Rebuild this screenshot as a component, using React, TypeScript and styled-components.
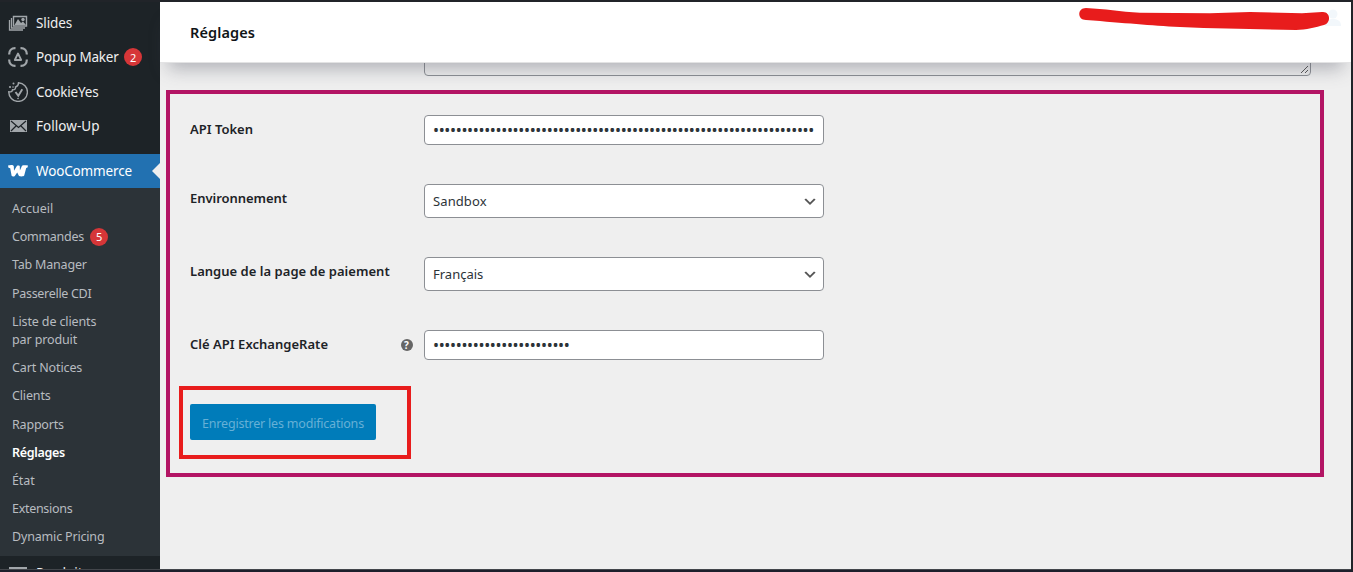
import React from "react";
import styled, { createGlobalStyle } from "styled-components";

const Global = createGlobalStyle`
  *, *::before, *::after { box-sizing: border-box; }
  body { margin: 0; background: #efefef; overflow: hidden; }
`;

const Frame = styled.div`
  display: flex;
  width: 1353px;
  height: 572px;
  border: solid #212429;
  border-width: 2px 2px 2px 0;
  border-bottom-color: #1c1f2b;
  background: #efefef;
  overflow: hidden;
  font-family: "Noto Sans", "Open Sans", sans-serif;
  font-size: 13px;
  color: #1d2327;
`;

const Sidebar = styled.nav`
  width: 160px;
  flex: none;
  height: 568px;
  overflow: hidden;
  background: #1d2327;
  border-bottom: 1px solid #43464b;
  padding-top: 4px;
`;

const MenuItem = styled.a<{ $active?: boolean }>`
  position: relative;
  display: flex;
  align-items: center;
  height: ${(p) => (p.$active ? "34px" : "34.25px")};
  margin-top: ${(p) => (p.$active ? "11px" : "0")};
  color: ${(p) => (p.$active ? "#fff" : "#f0f0f1")};
  background: ${(p) => (p.$active ? "#2271b1" : "transparent")};
  font-size: 13.5px;
  white-space: nowrap;
`;

const Arrow = styled.span`
  position: absolute;
  right: 0;
  top: 9px;
  border: 8px solid transparent;
  border-right-color: #efefef;
  border-left-width: 0;
`;

const IconCell = styled.span`
  display: flex;
  justify-content: center;
  width: 36px;
  color: #a1a6aa;
  svg { display: block; }
`;

const Text = styled.span<{ $ls?: number }>`
  letter-spacing: ${(p) => p.$ls ?? 0}px;
`;

const Badge = styled.span`
  display: inline-flex;
  align-items: center;
  justify-content: center;
  width: 18px;
  height: 18px;
  margin-left: 5.5px;
  border-radius: 9px;
  background: #d63638;
  color: #fff;
  font-size: 11px;
`;

const Submenu = styled.div`
  display: flex;
  flex-direction: column;
  height: 368px;
  padding-top: 6.9px;
  background: #2c3338;
`;

const SubItem = styled.a<{ $current?: boolean }>`
  display: flex;
  flex: none;
  align-items: center;
  padding: 5px 12px;
  min-height: 28.2px;
  font-size: 12.5px;
  line-height: 18.2px;
  white-space: pre;
  font-weight: ${(p) => (p.$current ? 600 : 400)};
  color: ${(p) => (p.$current ? "#fff" : "#b8bcc0")};
  ${Badge} { margin: -5px 0 -5px 6px; }
`;

const Main = styled.main`
  flex: 1;
  display: flex;
  flex-direction: column;
  min-width: 0;
  border-bottom: 1px solid #43464b;
`;

const Header = styled.header`
  position: relative;
  z-index: 1;
  flex: none;
  display: flex;
  align-items: center;
  justify-content: space-between;
  height: 61px;
  padding-left: 30px;
  background: #fff;
  border-bottom: 1px solid #e3e3e4;
  box-shadow: 0 14px 18px -8px rgba(75, 80, 95, 0.38);
`;

const Title = styled.h1`
  margin: 0;
  font-size: 14.5px;
  font-weight: 600;
  color: #101517;
`;

const HeaderMark = styled.svg`
  display: block;
  align-self: flex-start;
`;

const Textarea = styled.div`
  display: flex;
  justify-content: flex-end;
  align-items: flex-end;
  flex: none;
  width: 887px;
  height: 19px;
  margin: -6px 0 0 264px;
  border: 1px solid #8c8f94;
  border-radius: 4px;
`;

const Outline = styled.section`
  width: 1158px;
  height: 387px;
  margin: 14px 0 0 6px;
  border: 4px solid #b31564;
  padding: 21px 0 0 20px;
`;

const Row = styled.div<{ $h: number }>`
  display: flex;
  align-items: flex-start;
  height: ${(p) => p.$h}px;
`;

const Label = styled.label`
  display: flex;
  justify-content: space-between;
  width: 234px;
  padding: 5px 11px 0 0;
  line-height: 18px;
  font-size: 13px;
  font-weight: 600;
  white-space: nowrap;
`;

const Field = styled.div<{ $select?: boolean }>`
  display: flex;
  align-items: center;
  justify-content: space-between;
  width: 400px;
  height: ${(p) => (p.$select ? 34 : 30)}px;
  padding: 0 5px 0 8px;
  background: #fff;
  border: 1px solid #8c8f94;
  border-radius: 4px;
  color: #2c3338;
  white-space: nowrap;
`;

const Dots = styled.span`
  font-family: "Noto Sans", sans-serif;
  font-size: 16px;
  line-height: 20px;
  letter-spacing: -0.33px;
`;

const Help = styled.span`
  display: flex;
  align-items: center;
  justify-content: center;
  width: 12px;
  height: 12px;
  margin: 4px 0.5px 0 0;
  border-radius: 50%;
  background: #666;
  color: #fff;
  font-size: 10px;
  font-weight: 700;
  line-height: 12px;
`;

const Highlight = styled.div`
  width: 232px;
  height: 73px;
  margin-left: -11px;
  padding: 14px 0 0 7px;
  border: 4px solid #e81c1c;
`;

const Button = styled.button`
  display: block;
  width: 186px;
  height: 36px;
  padding: 2px 0 0;
  border: 0;
  border-radius: 2px;
  background: #007cba;
  color: #66b0d6;
  font-family: inherit;
  font-size: 12.5px;
  white-space: nowrap;
`;

const SlidesIcon = () => (
  <svg width="20" height="20" viewBox="0 0 20 20" fill="none" stroke="currentColor">
    <path d="M5.500 3.500h13v9.500h-13z" strokeWidth="1.400" />
    <path d="M3.500 5v10H17M1.500 7v10H15" strokeWidth="1.300" />
    <path d="M6.500 12l3.500-6 3 4 2-1.500 3 3.500z" fill="currentColor" stroke="none" />
    <circle cx="15" cy="6.500" r="1.700" fill="currentColor" stroke="none" />
  </svg>
);

const PopupIcon = () => (
  <svg width="20" height="20" viewBox="0 0 20 20" fill="none" stroke="currentColor" strokeWidth="2.200">
    <path d="M1.200 7.500V7C1.200 3.500 3.500 1.200 7 1.200H7.500M12.500 1.200H13c3.500 0 5.800 2.300 5.800 5.800v.5M18.800 12.500v.5c0 3.500-2.300 5.800-5.800 5.800h-.5M7.500 18.800H7c-3.500 0-5.800-2.300-5.800-5.800v-.5" />
    <path d="M10 6.500l3.200 6.500H6.800z" strokeWidth="1.800" strokeLinejoin="round" />
  </svg>
);

const CookieIcon = () => (
  <svg width="20" height="20" viewBox="0 0 20 20" fill="none" stroke="currentColor" strokeWidth="1.400">
    <path d="M10.500 .8a9.300 9.300 0 1 1-9.700 9c2 .4 3.500-.3 3.700-2 2 .2 3.300-.8 3-2.800 2-.6 3-2 3-4.200z" />
    <path d="M7.500 10l2.800 3.800 4-6.500" strokeWidth="1.900" />
    <g fill="currentColor" stroke="none">
      <circle cx="5.500" cy="1.500" r="1" /><circle cx="2" cy="5" r="1.100" /><circle cx="5" cy="5" r=".8" />
      <circle cx="10" cy="16.500" r=".8" />
    </g>
  </svg>
);

const MailIcon = () => (
  <svg width="20" height="20" viewBox="0 0 20 20">
    <path d="M2 4h17v12H2z" fill="currentColor" />
    <path d="M3 5l7.500 6.500L18 5M3 15l5-5M18 15l-5-5" fill="none" stroke="#1d2327" strokeWidth="1.200" />
  </svg>
);

const WooIcon = () => (
  <svg width="20" height="12" viewBox="0 0 20 12" fill="#fff">
    <path d="M0 .6C2 0 5.500-.3 5.800 1.300L6 5.800 9 .8C10 .2 11.800 .2 11.800 1.500L11.900 5.500 14 .8C15.500 .2 17 .3 20 .6L19.500 2.500 18.200 3 16.200 10.500C15.500 11.500 12.500 11.700 11 10.900L9.200 7.500 6.800 11C5.800 11.800 4.200 11.700 3.600 10.800L2.200 3.200 .5 2.800Z" />
  </svg>
);

const ArchiveIcon = () => (
  <svg width="20" height="20" viewBox="0 0 20 20" fill="currentColor">
    <path d="M19 4v2H1V4h18zM2 7h16v10H2V7zm11 3V9H7v1h6z" />
  </svg>
);

const Caret = () => (
  <svg width="16" height="16" viewBox="0 0 20 20" fill="#555">
    <path d="M5 6l5 5 5-5 2 1-7 7-7-7 2-1z" transform="translate(0 1)" />
  </svg>
);

const topItems = [
  { label: "Slides", icon: <SlidesIcon />, ls: -0.1 },
  { label: "Popup Maker", icon: <PopupIcon />, ls: -0.22, badge: 2 },
  { label: "CookieYes", icon: <CookieIcon />, ls: -0.2 },
  { label: "Follow-Up", icon: <MailIcon />, ls: 0.05 },
];

const subItems: { label: string; ls?: number; badge?: number; current?: boolean }[] = [
  { label: "Accueil" },
  { label: "Commandes", ls: -0.25, badge: 5 },
  { label: "Tab Manager", ls: -0.2 },
  { label: "Passerelle CDI", ls: -0.3 },
  { label: "Liste de clients\npar produit", ls: -0.12 },
  { label: "Cart Notices", ls: -0.12 },
  { label: "Clients", ls: -0.15 },
  { label: "Rapports", ls: -0.2 },
  { label: "Réglages", ls: -0.3, current: true },
  { label: "État", ls: -0.1 },
  { label: "Extensions", ls: -0.3 },
  { label: "Dynamic Pricing", ls: -0.17 },
];

export default function App() {
  return (
    <>
      <Global />
      <Frame>
        <Sidebar>
          {topItems.map((i) => (
            <MenuItem key={i.label}>
              <IconCell>{i.icon}</IconCell>
              <Text $ls={i.ls}>{i.label}</Text>
              {i.badge && <Badge>{i.badge}</Badge>}
            </MenuItem>
          ))}
          <MenuItem $active>
            <IconCell><WooIcon /></IconCell>
            <Text $ls={-0.15}>WooCommerce</Text>
            <Arrow />
          </MenuItem>
          <Submenu>
            {subItems.map((i) => (
              <SubItem key={i.label} $current={i.current}>
                <Text $ls={i.ls}>{i.label}</Text>
                {i.badge && <Badge>{i.badge}</Badge>}
              </SubItem>
            ))}
          </Submenu>
          <MenuItem>
            <IconCell><ArchiveIcon /></IconCell>
            <Text>Produits</Text>
          </MenuItem>
        </Sidebar>
        <Main>
          <Header>
            <Title><Text $ls={0.1}>Réglages</Text></Title>
            <HeaderMark width="275" height="40" viewBox="1076 2 275 40">
              <g fill="#f2f7fb">
                <circle cx="1333" cy="14" r="4.500" />
                <path d="M1325 26c0-5 3-7 8-7s8 2 8 7z" />
              </g>
              <path
                fill="#e81c1c"
                d="M1086 8C1077 8 1077 20 1086 20C1125 23 1150 25.500 1180 27C1220 29 1260 29 1296 30C1306 30 1316 27 1324 25C1332 22 1330 11 1322 12L1302 13.200L1250 12L1210 13.200L1140 12.800C1120 11.500 1105 9 1086 8Z"
              />
            </HeaderMark>
          </Header>
          <Textarea>
            <svg width="10" height="10" viewBox="0 0 10 10" stroke="#555" strokeWidth="1">
              <path d="M1 8L8 1M5 8L8 5" />
            </svg>
          </Textarea>
          <Outline>
            <Row $h={69}>
              <Label><Text>API Token</Text></Label>
              <Field><Dots>{"•".repeat(67)}</Dots></Field>
            </Row>
            <Row $h={73}>
              <Label><Text $ls={-0.05}>Environnement</Text></Label>
              <Field $select><Text $ls={0.1}>Sandbox</Text><Caret /></Field>
            </Row>
            <Row $h={73}>
              <Label><Text $ls={0.03}>Langue de la page de paiement</Text></Label>
              <Field $select><Text>Français</Text><Caret /></Field>
            </Row>
            <Row $h={56}>
              <Label><Text $ls={0.03}>Clé API ExchangeRate</Text><Help>?</Help></Label>
              <Field><Dots>{"•".repeat(24)}</Dots></Field>
            </Row>
            <Highlight>
              <Button><Text $ls={-0.2}>Enregistrer les modifications</Text></Button>
            </Highlight>
          </Outline>
        </Main>
      </Frame>
    </>
  );
}
